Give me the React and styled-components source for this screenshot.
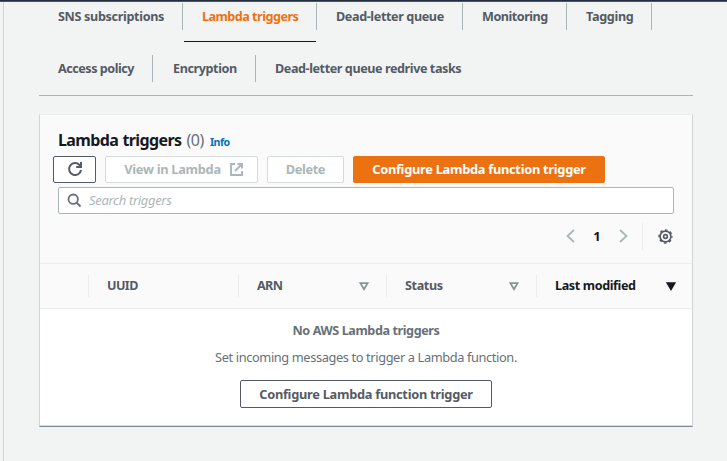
import React from "react";
import styled, { createGlobalStyle, css } from "styled-components";

const Global = createGlobalStyle`
  * { box-sizing: border-box; }
  body { margin: 0; background: #f2f3f3; overflow: hidden; }
  button, input { font: inherit; letter-spacing: inherit; }
`;

const Page = styled.div`
  height: 461px;
  display: flex;
  flex-direction: column;
  font-family: "Noto Sans", sans-serif;
  font-size: 13px;
  line-height: 20px;
  color: #545b64;
`;

const TopBar = styled.div`
  flex: none;
  height: 2px;
  background: #232f3e;
  border-bottom: 1px solid #4a5462;
`;

const Main = styled.main`
  flex: 1;
  margin-left: 3px;
  border-left: 1px solid #d1d5d5;
  padding: 1px 34px 0 35px;
`;

const Tabs = styled.nav`
  height: 93px;
  border-bottom: 1px solid #aab7b8;
  margin-bottom: 18px;
`;

const TabRow = styled.div`
  display: flex;
  height: 39px;
  margin-bottom: 13px;
`;

const Tab = styled.a`
  width: ${(p) => p.$width}px;
  height: 39px;
  padding-left: ${(p) => p.$inset ?? 19}px;
  font-size: 12.6px;
  line-height: 27px;
  font-weight: 700;
  white-space: nowrap;
  letter-spacing: ${(p) => p.$track}px;
  color: ${(p) => (p.$active ? "#ec7211" : "#545b64")};
  background:
    linear-gradient(#aab7b8, #aab7b8) right top / ${(p) => (p.$last ? 0 : 1)}px 27px no-repeat,
    linear-gradient(#16191f, #16191f) 1px bottom / ${(p) => (p.$active ? 132 : 0)}px 1px no-repeat;
`;

const Card = styled.section`
  height: 313px;
  background: #fff;
  border: 1px solid #d1d5d5;
  border-top-color: #eaeded;
  border-bottom: 1px solid #7d8d98;
  box-shadow: inset 0 -1px 0 #d5dbdb;
`;

const CardHeader = styled.header`
  height: 149px;
  padding: 15px 18px 0;
  background: #fafafa;
  border-bottom: 1px solid #eaeded;
`;

const Title = styled.h2`
  margin: 0;
  display: flex;
  align-items: baseline;
  height: 26px;
  line-height: 20px;
  font-size: 16px;
  font-weight: 700;
  letter-spacing: -0.6px;
  word-spacing: 0.5px;
  color: #16191f;
`;

const Count = styled.span`
  margin-left: 5px;
  font-weight: 400;
  letter-spacing: -0.4px;
  color: #687078;
`;

const Info = styled.a`
  margin-left: 6px;
  font-size: 10.6px;
  letter-spacing: -0.5px;
  color: #0073bb;
`;

const Actions = styled.div`
  display: flex;
  gap: 9px;
  margin: 0 0 4px -5px;
`;

const variants = {
  normal: css`color: #545b64; border-color: #545b64; background: #fff;`,
  disabled: css`color: #aab7b8; border-color: #d5dbdb; background: #fff;`,
  primary: css`color: #fff; border-color: #ec7211; background: #ec7211;`,
};

const Button = styled.button`
  display: flex;
  align-items: center;
  justify-content: center;
  gap: 9px;
  width: ${(p) => p.$width}px;
  height: ${(p) => p.$height ?? 27}px;
  padding: 0 0 1px ${(p) => p.$indent ?? 0}px;
  border: 1px solid;
  border-radius: 2px;
  font-size: 12.8px;
  font-weight: 700;
  line-height: 20px;
  white-space: nowrap;
  letter-spacing: ${(p) => p.$track ?? -0.27}px;
  ${(p) => variants[p.$variant ?? "normal"]}
`;

const Search = styled.label`
  display: flex;
  align-items: center;
  gap: 7px;
  height: 27px;
  padding-left: 8px;
  border: 1px solid #aab7b8;
  border-radius: 2px;
  background: #fff;
  color: #687078;
`;

const SearchInput = styled.input`
  flex: 1;
  padding: 0 0 2px;
  border: 0;
  outline: 0;
  background: none;
  letter-spacing: -0.32px;
  &::placeholder { color: #aab7b8; font-style: italic; opacity: 1; }
`;

const Pager = styled.div`
  display: flex;
  align-items: center;
  justify-content: flex-end;
  height: 27px;
  margin-top: 9px;
  color: #aab7b8;
  svg { margin-bottom: 1px; }
`;

const PageNumber = styled.span`
  width: 44px;
  padding-bottom: 1px;
  text-align: center;
  font-weight: 700;
  color: #16191f;
`;

const Preferences = styled.span`
  display: flex;
  align-items: center;
  justify-content: flex-end;
  width: 32px;
  height: 27px;
  margin-left: 14px;
  padding-right: 1px;
  border-left: 1px solid #eaeded;
  color: #545b64;
`;

const Columns = styled.div`
  display: grid;
  grid-template-columns: 48px 150px 148px 150px 1fr;
  align-items: center;
  height: 45px;
  background: #fafafa;
  border-bottom: 1px solid #eaeded;
`;

const Column = styled.div`
  display: flex;
  align-items: center;
  justify-content: space-between;
  height: 22px;
  padding: 0 ${(p) => p.$end ?? 17}px 0 18px;
  border-left: 1px solid ${(p) => (p.$blank ? "transparent" : "#eaeded")};
  font-size: 12.6px;
  font-weight: 700;
  line-height: 20px;
  letter-spacing: ${(p) => p.$track ?? -0.38}px;
  color: ${(p) => (p.$sorted ? "#16191f" : "#545b64")};
`;

const Empty = styled.div`
  display: flex;
  flex-direction: column;
  align-items: center;
  padding-top: 12px;
  color: #687078;
`;

const EmptyTitle = styled.strong`
  font-size: 12.6px;
  letter-spacing: -0.4px;
`;

const EmptyText = styled.p`
  margin: 6px 0 13px;
  font-size: 12.8px;
  letter-spacing: -0.38px;
`;

const Svg = ({ w = 16, h = w, box = `0 0 ${w} ${h}`, children }) => (
  <svg width={w} height={h} viewBox={box} fill="none" stroke="currentColor" strokeWidth="2">{children}</svg>
);

const RefreshIcon = () => (
  <Svg><path d="M14 9A6 6 0 1 1 12.3 3.8L14 5.5M14 1v5H9.2" /></Svg>
);
const ExternalIcon = () => (
  <Svg w={13}><path d="M5 1H1v11h11V8M7.5 1H12v4.5M12 1L5 8" strokeWidth="1.9" /></Svg>
);
const SearchIcon = () => (
  <Svg w={15}><circle cx="6.2" cy="6.2" r="4.7" strokeWidth="1.8" /><path d="M9.6 9.6L13.5 13.5" /></Svg>
);
const Chevron = ({ right }) => (
  <Svg w={9} h={14}><path d={right ? "M1 1l6.5 6L1 13" : "M8 1L1.5 7 8 13"} strokeWidth="1.8" /></Svg>
);
const GearIcon = () => (
  <Svg w={15}>
    <circle cx="7.5" cy="7.5" r="5.4" strokeWidth="1.6" />
    <circle cx="7.5" cy="7.5" r="6.5" strokeWidth="1.4" strokeDasharray="2.6 2.505" strokeDashoffset="1.3" />
    <circle cx="7.5" cy="7.5" r="1.9" strokeWidth="1.6" />
  </Svg>
);
const SortIcon = ({ filled }) => (
  <Svg w={10} h={9}>
    <path d="M1.4 1.2h7.2L5 7.2z" strokeWidth="1.8" stroke={filled ? "#16191f" : "#879596"} fill={filled ? "#16191f" : "none"} />
  </Svg>
);

export default function App() {
  return (
    <Page>
      <Global />
      <TopBar />
      <Main>
        <Tabs>
          <TabRow>
            <Tab $width={144} $track={-0.33}>SNS subscriptions</Tab>
            <Tab $width={134} $track={-0.5} $active>Lambda triggers</Tab>
            <Tab $width={146} $track={-0.38}>Dead-letter queue</Tab>
            <Tab $width={104} $track={-0.48}>Monitoring</Tab>
            <Tab $width={85} $track={-0.3}>Tagging</Tab>
          </TabRow>
          <TabRow>
            <Tab $width={114} $track={-0.48}>Access policy</Tab>
            <Tab $width={103} $inset={20} $track={-0.4}>Encryption</Tab>
            <Tab $width={260} $track={-0.42} $last>Dead-letter queue redrive tasks</Tab>
          </TabRow>
        </Tabs>
        <Card>
          <CardHeader>
            <Title>Lambda triggers<Count>(0)</Count><Info>Info</Info></Title>
            <Actions>
              <Button $width={43} aria-label="Refresh"><RefreshIcon /></Button>
              <Button $width={153} $indent={4} $variant="disabled">View in Lambda<ExternalIcon /></Button>
              <Button $width={77} $track={-0.4} $variant="disabled">Delete</Button>
              <Button $width={252} $variant="primary">Configure Lambda function trigger</Button>
            </Actions>
            <Search><SearchIcon /><SearchInput placeholder="Search triggers" /></Search>
            <Pager>
              <Chevron />
              <PageNumber>1</PageNumber>
              <Chevron right />
              <Preferences><GearIcon /></Preferences>
            </Pager>
          </CardHeader>
          <Columns>
            <Column $blank />
            <Column $track={-0.6}>UUID</Column>
            <Column $track={-0.6}>ARN<SortIcon /></Column>
            <Column>Status<SortIcon /></Column>
            <Column $sorted $end={16}>Last modified<SortIcon filled /></Column>
          </Columns>
          <Empty>
            <EmptyTitle>No AWS Lambda triggers</EmptyTitle>
            <EmptyText>Set incoming messages to trigger a Lambda function.</EmptyText>
            <Button $width={252} $height={28}>Configure Lambda function trigger</Button>
          </Empty>
        </Card>
      </Main>
    </Page>
  );
}
